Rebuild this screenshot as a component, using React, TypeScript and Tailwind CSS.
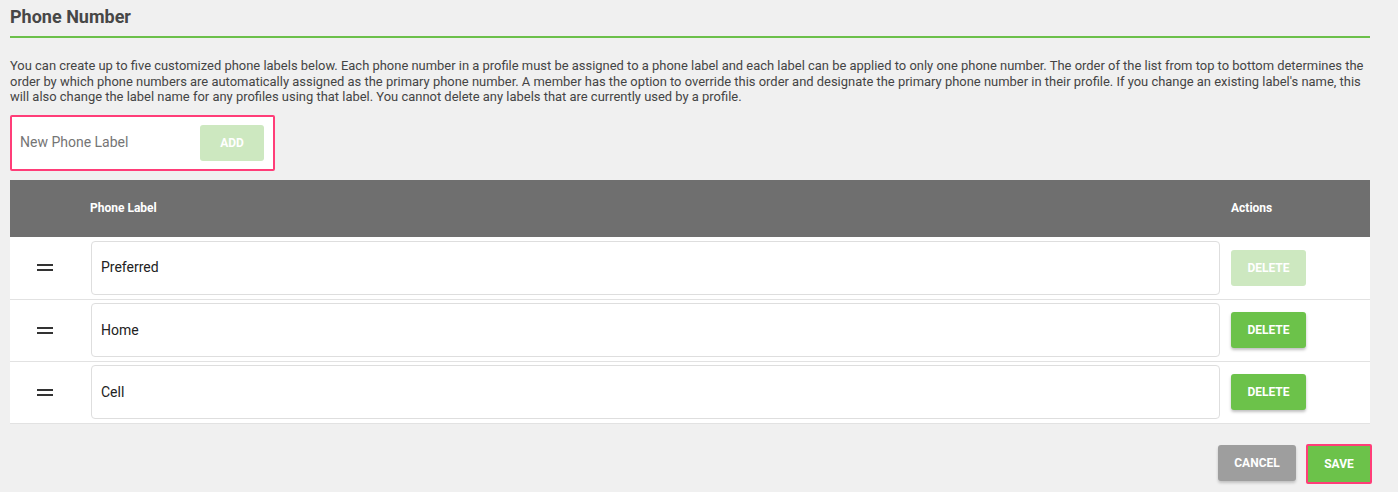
const rows = [
  { label: "Preferred", disabled: true, h: "h-[63px]" },
  { label: "Home", disabled: false, h: "h-[62px]" },
  { label: "Cell", disabled: false, h: "h-[62px]" },
];

function DragHandle() {
  return (
    <div className="flex w-[80px] justify-center">
      <div className="flex w-[16px] flex-col gap-[3px] -ml-[10px]">
        <div className="h-[2px] bg-[#333]" />
        <div className="h-[2px] bg-[#333]" />
      </div>
    </div>
  );
}

export default function App() {
  return (
    <main
      className="min-h-screen w-full bg-[#f0f0f0] text-[#444]"
      style={{ fontFamily: "Roboto, 'Liberation Sans', sans-serif" }}
    >
      <div className="ml-[10px] w-[1360px]">
        <h1 className="pt-[6px] text-[18px] font-bold leading-[22px] text-[#474747]">Phone Number</h1>
        <div className="mt-[8px] h-[2px] bg-[#6cc04a]" />
        <p className="mt-[20px] text-[12.95px] leading-[15.5px] text-[#444]">
          You can create up to five customized phone labels below. Each phone number in a profile must be assigned to a phone label and each label can be applied to only one phone number. The order of the list from top to bottom determines the order by which phone numbers are automatically assigned as the primary phone number. A member has the option to override this order and designate the primary phone number in their profile. If you change an existing label's name, this will also change the label name for any profiles using that label. You cannot delete any labels that are currently used by a profile.
        </p>

        <div className="mt-[10px] flex h-[56px] w-[265px] items-center justify-between rounded-[2px] border-2 border-[#ff3d78] bg-white pl-[8px] pr-[9px]">
          <span className="text-[14px] text-[#757575]">New Phone Label</span>
          <button className="h-[36px] w-[64px] rounded-[3px] bg-[#cde8c0] text-[12px] font-bold text-white">ADD</button>
        </div>

        <div className="mt-[9px]">
          <div className="flex h-[57px] items-center bg-[#6f6f6f] text-[12px] font-bold text-white">
            <div className="w-[80px]" />
            <div className="flex-1">Phone Label</div>
            <div className="w-[139px]">Actions</div>
          </div>
          {rows.map((r) => (
            <div key={r.label} className={`flex ${r.h} items-center border-b border-[#e2e2e2] bg-white`}>
              <DragHandle />
              <div className="ml-[1px] flex h-[54px] flex-1 items-center rounded-[4px] border border-[#dedede] bg-white pl-[9px] text-[14px] text-[#222]">
                {r.label}
              </div>
              <div className="w-[150px] pl-[11px]">
                <button
                  className={
                    r.disabled
                      ? "h-[36px] w-[75px] rounded-[3px] bg-[#cde8c0] text-[12px] font-bold text-white"
                      : "h-[36px] w-[75px] rounded-[3px] bg-[#6cc24a] text-[12px] font-bold text-white shadow-[0_2px_3px_rgba(0,0,0,0.25)]"
                  }
                >
                  DELETE
                </button>
              </div>
            </div>
          ))}
        </div>

        <div className="mt-[20px] flex justify-end gap-[10px] -mr-[2px]">
          <button className="mt-[1px] h-[36px] w-[78px] rounded-[3px] bg-[#9e9e9e] text-[12px] font-bold text-white shadow-[0_2px_3px_rgba(0,0,0,0.2)]">
            CANCEL
          </button>
          <div className="rounded-[2px] border-2 border-[#ff3d78]">
            <button className="h-[36px] w-[62px] bg-[#6cc24a] text-[12px] font-bold text-white">SAVE</button>
          </div>
        </div>
      </div>
    </main>
  );
}
